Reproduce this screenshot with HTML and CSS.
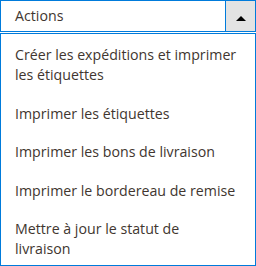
FILE: index.html
```html
<!DOCTYPE html>
<html>
<head>
<meta charset="utf-8">
<link rel="stylesheet" href="styles.css">
</head>
<body>
<div class="actions">
  <div class="select">
    <span class="label">Actions</span>
    <span class="toggle"><span class="arrow"></span></span>
  </div>
  <ul class="menu">
    <li class="item">Créer les expéditions et imprimer<br>les étiquettes</li>
    <li class="item">Imprimer les étiquettes</li>
    <li class="item">Imprimer les bons de livraison</li>
    <li class="item">Imprimer le bordereau de remise</li>
    <li class="item">Mettre à jour le statut de<br>livraison</li>
  </ul>
</div>
</body>
</html>
```
FILE: styles.css
```css
html, body {
  margin: 0;
  padding: 0;
  background: #ffffff;
}
body {
  font-family: "Open Sans", "Liberation Sans", sans-serif;
  font-size: 14.2px;
  color: #41362f;
}
.actions {
  width: 256px;
  display: flex;
  flex-direction: column;
  gap: 1px;
}
.select {
  box-sizing: border-box;
  height: 32px;
  border: 1px solid #007bdb;
  display: flex;
  align-items: stretch;
}
.label {
  flex: 1;
  display: flex;
  align-items: center;
  padding-left: 14px;
  padding-bottom: 1px;
}
.toggle {
  width: 30px;
  background: #e3e3e3;
  border-left: 1px solid #007bdb;
  display: flex;
  align-items: center;
  justify-content: center;
  padding-top: 4px;
  box-sizing: border-box;
}
.arrow {
  width: 0;
  height: 0;
  border-left: 5px solid transparent;
  border-right: 5px solid transparent;
  border-bottom: 5px solid #000000;
}
.menu {
  box-sizing: border-box;
  height: 233px;
  margin: 0;
  padding: 2px 0 0;
  list-style: none;
  border: 1px solid #007bdb;
  overflow: hidden;
}
.item {
  padding: 9px 4px 9.5px 14px;
  line-height: 20px;
  white-space: nowrap;
}
```
